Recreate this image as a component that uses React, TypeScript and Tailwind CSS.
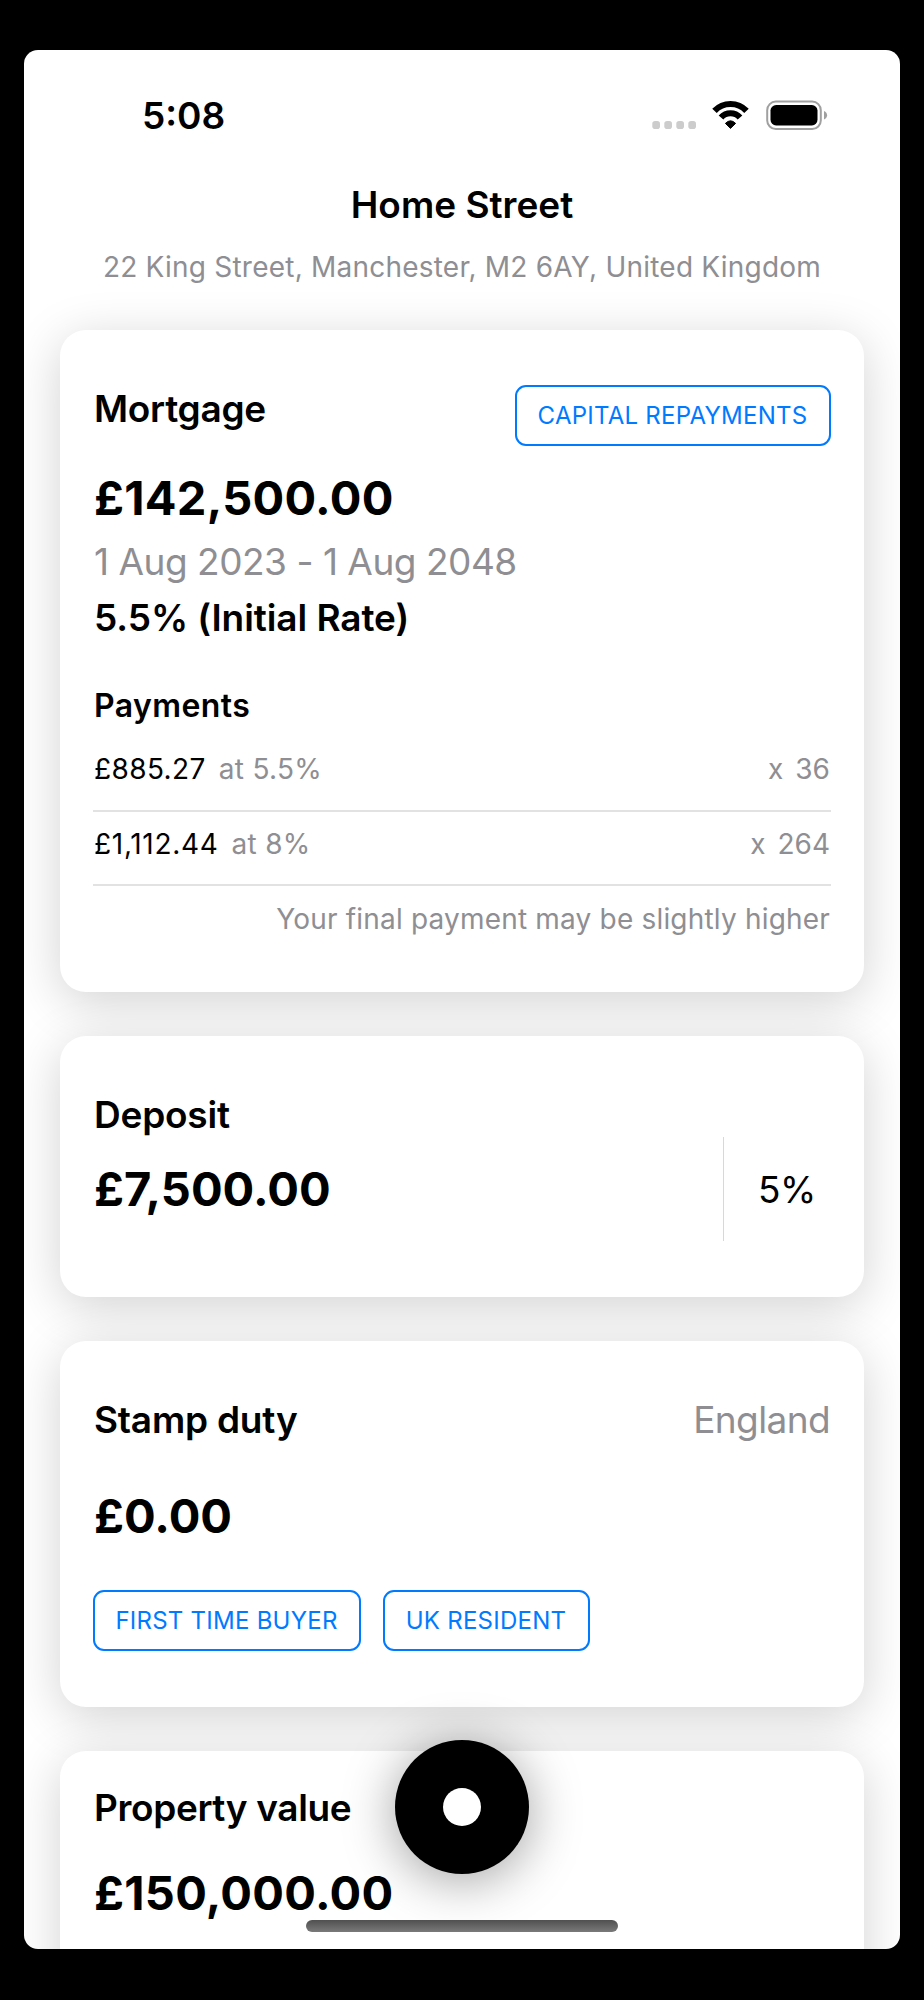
import type { ReactNode } from "react"
import clsx from "clsx"

const payments = [
  { amount: "£885.27", rate: "at 5.5%", count: "36", row: "h-[74px] pt-[13px]", tracking: "tracking-[0.4px]" },
  { amount: "£1,112.44", rate: "at 8%", count: "264", row: "h-[74px] pt-[14px]", tracking: "tracking-[0.7px]" },
]

function StatusIcons() {
  return (
    <svg width="176" height="30" viewBox="0 0 176 30" className="mt-[6px]">
      {/* no signal */}
      {[0.3, 12.3, 24.3, 36.3].map((x) => (
        <rect key={x} x={x} y="21" width="7.7" height="8" rx="2.8" fill="#cccccc" />
      ))}

      {/* wifi */}
      <g fill="none" stroke="#000" strokeWidth="6.2">
        <path d="M62.5 10.9A22 22 0 0 1 94.5 10.9" />
        <path d="M69 17.5A12.7 12.7 0 0 1 88 17.5" />
      </g>
      <path d="M73.4 23.4Q78.5 18.2 83.6 23.4L78.5 28.4Z" fill="#000" stroke="#000" strokeWidth="1" strokeLinejoin="round" />

      {/* battery */}
      <rect x="115.2" y="1.6" width="53.6" height="27.4" rx="8.6" fill="none" stroke="#a0a0a0" strokeWidth="2" />
      <rect x="118.5" y="5" width="47" height="20.4" rx="5.6" fill="#000" />
      <path d="M172 11C174 11.8 175.1 13.4 175.1 15.2C175.1 17 174 18.6 172 19.4Z" fill="#a0a0a0" />
    </svg>
  )
}

function Card({ className, children }: { className?: string; children: ReactNode }) {
  return (
    <section
      className={clsx(
        "flex shrink-0 flex-col rounded-[26px] bg-white px-[33px] shadow-[0_10px_50px_rgba(0,0,0,0.18)]",
        className
      )}
    >
      {children}
    </section>
  )
}

function Title({ className, children }: { className?: string; children: ReactNode }) {
  return (
    <h2 className={clsx("pl-px text-[37px] leading-[44px] font-semibold", className ?? "tracking-[-0.22px]")}>
      {children}
    </h2>
  )
}

function Amount({ className, children }: { className?: string; children: ReactNode }) {
  return <p className={clsx("pl-px text-[47px] leading-[56px] font-bold", className)}>{children}</p>
}

function Chip({ className, children }: { className?: string; children: ReactNode }) {
  return (
    <span
      className={clsx(
        "flex h-[61px] items-center justify-center rounded-[11px] border-2 border-[#007aff] pr-px text-[24px] tracking-[0.25px] text-[#007aff] uppercase",
        className
      )}
    >
      {children}
    </span>
  )
}

export default function App() {
  return (
    <div className="h-[2000px] w-[924px] bg-black px-[24px] pt-[50px] font-['Inter',sans-serif] text-black">
      <main className="relative flex h-[1899px] flex-col overflow-hidden rounded-[14px] bg-white px-[36px] whitespace-nowrap">
        <div className="flex shrink-0 justify-between pt-[44px] pr-[36px] pl-[82px]">
          <span className="text-[37px] leading-[44px] font-semibold">5:08</span>
          <StatusIcons />
        </div>

        <header className="mt-[45px] flex h-[147px] shrink-0 flex-col items-center">
          <h1 className="text-[37px] leading-[44px] font-semibold">Home Street</h1>
          <p className="mt-[22px] text-[28px] leading-[36px] tracking-[0.22px] text-[#8e8e93]">
            22 King Street, Manchester, M2 6AY, United Kingdom
          </p>
        </header>

        <div className="flex flex-col gap-[44px]">
          <Card className="h-[662px] pt-[55px]">
            <div className="flex items-start justify-between">
              <Title className="mt-[2px] tracking-[-0.28px]">Mortgage</Title>
              <Chip className="w-[316px]">Capital repayments</Chip>
            </div>
            <Amount className="mt-[24px] tracking-[0.25px]">£142,500.00</Amount>
            <p className="mt-[14px] pl-px text-[37px] leading-[44px] tracking-[-0.48px] text-[#8e8e93]">
              1 Aug 2023 - 1 Aug 2048
            </p>
            <p className="mt-[12px] pl-px text-[37px] leading-[44px] font-semibold tracking-[-0.07px]">
              5.5% (Initial Rate)
            </p>

            <h3 className="mt-[46px] mb-[12px] pl-px text-[32px] leading-[40px] font-semibold tracking-[0.4px]">
              Payments
            </h3>
            {payments.map((p) => (
              <div
                key={p.amount}
                className={clsx("flex justify-between border-b-2 border-[#e2e2e3] text-[28px] leading-[36px]", p.row)}
              >
                <div className="flex gap-[13px] pl-px">
                  <span className={p.tracking}>{p.amount}</span>
                  <span className="tracking-[0.3px] text-[#8e8e93]">{p.rate}</span>
                </div>
                <div className="flex gap-[12px] pr-px text-[#8e8e93]">
                  <span>x</span>
                  <span>{p.count}</span>
                </div>
              </div>
            ))}
            <p className="mt-[15px] pr-px text-right text-[28px] leading-[36px] tracking-[0.19px] text-[#8e8e93]">
              Your final payment may be slightly higher
            </p>
          </Card>

          <Card className="h-[261px] pt-[57px]">
            <Title>Deposit</Title>
            <div className="flex h-[104px] items-center justify-between">
              <Amount>£7,500.00</Amount>
              <div className="flex h-full w-[108px] items-center justify-center border-l border-[#d8d8d9] pt-px pl-[19px] text-[37px] tracking-[-0.4px]">
                5%
              </div>
            </div>
          </Card>

          <Card className="h-[366px] pt-[57px]">
            <div className="flex justify-between">
              <Title>Stamp duty</Title>
              <span className="pr-px text-[37px] leading-[44px] tracking-[-0.6px] text-[#8e8e93]">England</span>
            </div>
            <Amount className="mt-[46px]">£0.00</Amount>
            <div className="mt-[46px] flex gap-[22px]">
              <Chip className="w-[268px]">First time buyer</Chip>
              <Chip className="w-[207px]">UK resident</Chip>
            </div>
          </Card>

          <Card className="h-[360px] pt-[35px]">
            <Title className="tracking-[-0.37px]">Property value</Title>
            <Amount className="mt-[35px] tracking-[0.28px]">£150,000.00</Amount>
          </Card>
        </div>

        {/* record button */}
        <button className="absolute top-[1690px] left-[371px] flex size-[134px] items-center justify-center rounded-full bg-black shadow-[0_6px_52px_rgba(0,0,0,0.38)]">
          <span className="size-[38px] rounded-full bg-white" />
        </button>

        {/* home indicator */}
        <div className="absolute top-[1870px] left-[282px] h-[12px] w-[312px] rounded-full bg-gradient-to-b from-[#505050] to-[#7a7a7a]" />
      </main>
    </div>
  )
}
